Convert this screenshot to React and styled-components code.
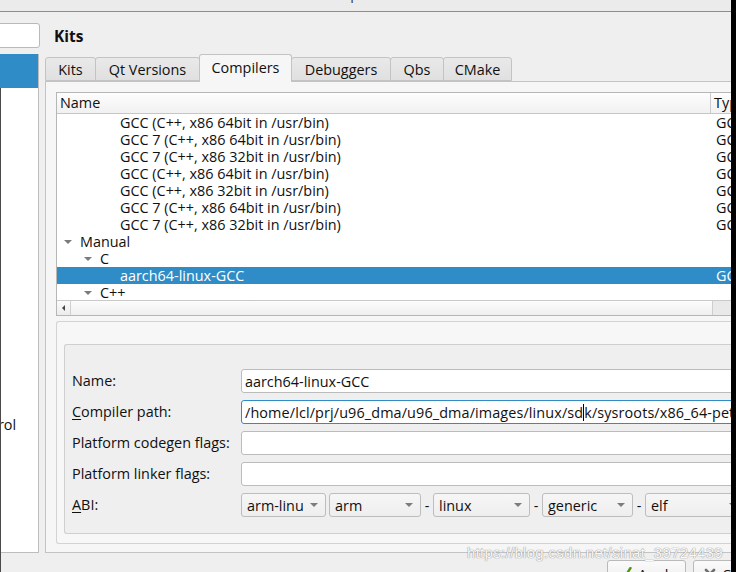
import React from "react";
import styled, { createGlobalStyle } from "styled-components";

const GlobalStyle = createGlobalStyle`
  html, body { margin: 0; padding: 0; background: #efefef; }
  body {
    font-family: "Open Sans", "Noto Sans", sans-serif;
    font-size: 14.4px;
    line-height: 19px;
    color: #101010;
  }
  #root { width: 736px; height: 572px; }
`;

const Window = styled.div`
  position: relative;
  width: 736px;
  height: 572px;
  box-sizing: border-box;
  border-right: 5px solid #000;
  overflow: hidden;
  background: #efefef;
  display: flex;
  flex-direction: column;
`;

const TitleBar = styled.div`
  flex: none;
  height: 11px;
  background: #ebebeb;
  border-bottom: 1px solid #8e8e8e;
  overflow: hidden;
  display: flex;
  justify-content: center;
`;

const TitleText = styled.span`
  display: block;
  margin-top: -16px;
  font-size: 14.4px;
  line-height: 20px;
  color: #3a3a3a;
`;

const WindowEdge = styled.div`
  position: absolute;
  left: 0;
  top: 88px;
  bottom: 0;
  width: 1px;
  background: #4a4a4a;
`;

const Body = styled.div`
  flex: none;
  height: 541px;
  display: flex;
`;

const LeftPane = styled.div`
  flex: none;
  width: 39px;
  display: flex;
  flex-direction: column;
`;

const SearchField = styled.div`
  flex: none;
  margin-top: 11px;
  margin-left: -8px;
  height: 23px;
  width: 46px;
  background: #fff;
  border: 1px solid #b9b9b9;
  border-radius: 3px;
`;

const SideList = styled.div`
  flex: 1;
  margin-top: 6px;
  margin-left: -162px;
  width: 200px;
  background: #fff;
  border-right: 1px solid #bdbdbd;
  border-bottom: 1px solid #bdbdbd;
  overflow: hidden;
`;

const SideItem = styled.div`
  height: ${(p) => p.$h}px;
  display: flex;
  align-items: center;
  padding-left: 74px;
  white-space: nowrap;
  background: ${(p) => (p.$selected ? "#308cc6" : "transparent")};
  color: ${(p) => (p.$selected ? "#fff" : "#101010")};
`;

const Main = styled.div`
  flex: none;
  width: 740px;
  display: flex;
  flex-direction: column;
  padding-left: 6px;
`;

const Heading = styled.div`
  margin-top: 14px;
  margin-left: 9px;
  height: 20px;
  line-height: 20px;
  font-size: 15.5px;
  font-weight: 700;
`;

const TabBar = styled.div`
  margin-top: 8px;
  height: 27px;
  display: flex;
  align-items: flex-end;
  position: relative;
  z-index: 1;
`;

const Tab = styled.div`
  box-sizing: border-box;
  height: ${(p) => (p.$active ? 28 : 24)}px;
  margin-bottom: ${(p) => (p.$active ? -1 : 0)}px;
  margin-left: -1px;
  width: ${(p) => p.$w}px;
  display: flex;
  align-items: center;
  justify-content: center;
  white-space: nowrap;
  padding-bottom: ${(p) => (p.$active ? 2 : 0)}px;
  border: 1px solid #c3c3c3;
  border-bottom: ${(p) => (p.$active ? "none" : "1px solid #c3c3c3")};
  border-radius: 3px 3px 0 0;
  background: ${(p) =>
    p.$active ? "#f6f6f6" : "linear-gradient(#e9e9e9, #e0e0e0)"};
  &:first-child { margin-left: 0; }
`;

const TabPane = styled.div`
  flex: 1;
  border: 1px solid #c3c3c3;
  background: #f6f6f6;
  padding: 10px 0 8px 10px;
  display: flex;
  flex-direction: column;
`;

const Tree = styled.div`
  flex: none;
  height: 222px;
  border: 1px solid #b6b6b6;
  background: #fff;
  display: flex;
  flex-direction: column;
`;

const TreeHeader = styled.div`
  flex: none;
  height: 20px;
  display: flex;
  background: linear-gradient(#fdfdfd, #f1f1f1);
  border-bottom: 1px solid #c6c6c6;
`;

const HeaderCell = styled.div`
  box-sizing: border-box;
  width: ${(p) => p.$w}px;
  flex: none;
  padding-left: ${(p) => p.$pad}px;
  line-height: 20px;
  border-right: 1px solid #cbcbcb;
  white-space: nowrap;
`;

const TreeBody = styled.div`
  flex: 1;
  overflow: hidden;
`;

const TreeRow = styled.div`
  height: 17px;
  line-height: 17px;
  display: flex;
  align-items: center;
  background: ${(p) => (p.$selected ? "#308cc6" : "transparent")};
  color: ${(p) => (p.$selected ? "#fff" : "#101010")};
  white-space: nowrap;
`;

const NameCell = styled.div`
  box-sizing: border-box;
  flex: none;
  width: 653px;
  display: flex;
  align-items: center;
  padding-left: ${(p) => 7 + p.$level * 20}px;
`;

const Branch = styled.span`
  flex: none;
  width: 16px;
  display: flex;
  align-items: center;
  &::before {
    content: "";
    display: ${(p) => (p.$open ? "block" : "none")};
    border-left: 4px solid transparent;
    border-right: 4px solid transparent;
    border-top: 4px solid #7b7b7b;
  }
`;

const TypeCell = styled.div`
  padding-left: 6px;
`;

const HScroll = styled.div`
  flex: none;
  height: 14px;
  display: flex;
  border-top: 1px solid #c9c9c9;
  background: #e9e9e9;
`;

const ScrollArrow = styled.div`
  flex: none;
  width: 13px;
  display: flex;
  align-items: center;
  justify-content: center;
  border-right: 1px solid #cfcfcf;
  background: linear-gradient(#fbfbfb, #ececec);
  &::before {
    content: "";
    border-top: 3px solid transparent;
    border-bottom: 3px solid transparent;
    border-right: 3px solid #444;
  }
`;

const ScrollHandle = styled.div`
  flex: none;
  width: 641px;
  border-right: 1px solid #cdcdcd;
  background: linear-gradient(#fcfcfc, #efefef);
`;

const DetailsPanel = styled.div`
  flex: 1;
  margin-top: 5px;
  border: 1px solid #d3d3d3;
  border-right: none;
  border-radius: 3px 0 0 3px;
  background: #f7f7f7;
  padding: 22px 0 9px 7px;
  display: flex;
  flex-direction: column;
`;

const InnerFrame = styled.div`
  flex: 1;
  border: 1px solid #cfcfcf;
  border-right: none;
  border-radius: 3px 0 0 3px;
  background: #efefef;
  padding: 24px 0 0 7px;
  display: grid;
  grid-template-columns: 169px 1fr;
  grid-auto-rows: 24px;
  row-gap: 7px;
  align-items: center;
  align-content: start;
`;

const Label = styled.div`
  white-space: nowrap;
  line-height: 20px;
  & u { text-decoration-thickness: 1px; text-underline-offset: 2px; }
`;

const LineEdit = styled.div`
  box-sizing: border-box;
  height: 24px;
  display: flex;
  align-items: center;
  padding-left: 3px;
  white-space: pre;
  overflow: hidden;
  background: #fff;
  border: 1px solid ${(p) => (p.$focused ? "#308cc6" : "#bcbcbc")};
  border-radius: 3px;
`;

const PathText = styled.span`
  letter-spacing: 0.12px;
`;

const Caret = styled.span`
  flex: none;
  display: inline-block;
  width: 1px;
  height: 17px;
  background: #000;
`;

const AbiRow = styled.div`
  display: flex;
  align-items: center;
  gap: 3px;
  height: 24px;
`;

const Combo = styled.div`
  box-sizing: border-box;
  flex: none;
  width: ${(p) => p.$w}px;
  height: 24px;
  display: flex;
  align-items: center;
  padding-left: 5px;
  border: 1px solid #bdbdbd;
  border-radius: 3px;
  background: linear-gradient(#f6f6f6, #eeeeee);
`;

const ComboText = styled.span`
  flex: 1;
  overflow: hidden;
  white-space: nowrap;
  text-overflow: clip;
`;

const ComboArrow = styled.span`
  flex: none;
  width: 22px;
  display: flex;
  justify-content: center;
  &::before {
    content: "";
    border-left: 4px solid transparent;
    border-right: 4px solid transparent;
    border-top: 4px solid #7c7c7c;
  }
`;

const Dash = styled.span`
  flex: none;
  width: 6px;
  text-align: center;
`;

const Footer = styled.div`
  flex: 1;
  display: flex;
  justify-content: flex-end;
  align-items: flex-start;
  padding-top: 7px;
  gap: 7px;
  margin-right: -52px;
`;

const PushButton = styled.div`
  box-sizing: border-box;
  flex: none;
  width: ${(p) => p.$w}px;
  height: 28px;
  display: flex;
  align-items: center;
  gap: 6px;
  padding-left: 10px;
  border: 1px solid #b9b9b9;
  border-radius: 3px;
  background: linear-gradient(#fafafa, #ececec);
`;

const Watermark = styled.div`
  position: absolute;
  left: 467px;
  top: 543px;
  font-family: "Liberation Sans", Arial, sans-serif;
  font-size: 15px;
  letter-spacing: 0.3px;
  color: rgba(255, 255, 255, 0.95);
  text-shadow: 0 0 1px #8c8c8c, 0 0 1px #9a9a9a;
  white-space: nowrap;
  pointer-events: none;
`;

const sideItems = [
  { label: "Kits", h: 34, selected: true },
  { label: "Environment", h: 32 },
  { label: "Text Editor", h: 32 },
  { label: "FakeVim", h: 32 },
  { label: "Help", h: 32 },
  { label: "C++", h: 32 },
  { label: "Qt Quick", h: 32 },
  { label: "Build & Run", h: 32 },
  { label: "Debugger", h: 32 },
  { label: "Designer", h: 32 },
  { label: "Analyzer", h: 32 },
  { label: "Version Control", h: 32 },
  { label: "Devices", h: 32 },
  { label: "Testing", h: 32 },
];

const tabs = [
  { label: "Kits", w: 51 },
  { label: "Qt Versions", w: 105 },
  { label: "Compilers", w: 93, active: true },
  { label: "Debuggers", w: 100 },
  { label: "Qbs", w: 54 },
  { label: "CMake", w: 69 },
];

const treeRows = [
  { name: "GCC (C++, x86 64bit in /usr/bin)", level: 2, type: "GCC" },
  { name: "GCC 7 (C++, x86 64bit in /usr/bin)", level: 2, type: "GCC" },
  { name: "GCC 7 (C++, x86 32bit in /usr/bin)", level: 2, type: "GCC" },
  { name: "GCC (C++, x86 64bit in /usr/bin)", level: 2, type: "GCC" },
  { name: "GCC (C++, x86 32bit in /usr/bin)", level: 2, type: "GCC" },
  { name: "GCC 7 (C++, x86 64bit in /usr/bin)", level: 2, type: "GCC" },
  { name: "GCC 7 (C++, x86 32bit in /usr/bin)", level: 2, type: "GCC" },
  { name: "Manual", level: 0, open: true },
  { name: "C", level: 1, open: true },
  { name: "aarch64-linux-GCC", level: 2, type: "GCC", selected: true },
  { name: "C++", level: 1, open: true },
];

const CheckIcon = () => (
  <svg width="14" height="14" viewBox="0 0 14 14">
    <path d="M2 8 L5.5 12 L12.5 1" fill="none" stroke="#4e9a06" strokeWidth="2.4" strokeLinecap="round" />
  </svg>
);

const CrossIcon = () => (
  <svg width="12" height="12" viewBox="0 0 12 12">
    <path d="M2 2 L10 10 M10 2 L2 10" fill="none" stroke="#6f6f6f" strokeWidth="2.6" strokeLinecap="round" />
  </svg>
);

export default function App() {
  return (
    <>
      <GlobalStyle />
      <Window>
        <TitleBar>
          <TitleText>Options</TitleText>
        </TitleBar>
        <Body>
          <LeftPane>
            <SearchField />
            <SideList>
              {sideItems.map((it) => (
                <SideItem key={it.label} $h={it.h} $selected={it.selected}>
                  {it.label}
                </SideItem>
              ))}
            </SideList>
          </LeftPane>
          <Main>
            <Heading>Kits</Heading>
            <TabBar>
              {tabs.map((t) => (
                <Tab key={t.label} $w={t.w} $active={t.active}>
                  {t.label}
                </Tab>
              ))}
            </TabBar>
            <TabPane>
              <Tree>
                <TreeHeader>
                  <HeaderCell $w={654} $pad={3}>Name</HeaderCell>
                  <HeaderCell $w={80} $pad={3}>Type</HeaderCell>
                </TreeHeader>
                <TreeBody>
                  {treeRows.map((r, i) => (
                    <TreeRow key={i} $selected={r.selected}>
                      <NameCell $level={r.level}>
                        <Branch $open={r.open} />
                        {r.name}
                      </NameCell>
                      <TypeCell>{r.type || ""}</TypeCell>
                    </TreeRow>
                  ))}
                </TreeBody>
                <HScroll>
                  <ScrollArrow />
                  <ScrollHandle />
                </HScroll>
              </Tree>
              <DetailsPanel>
                <InnerFrame>
                  <Label>Name:</Label>
                  <LineEdit>aarch64-linux-GCC</LineEdit>
                  <Label>
                    <u>C</u>ompiler path:
                  </Label>
                  <LineEdit $focused>
                    <PathText>/home/lcl/prj/u96_dma/u96_dma/images/linux/sd</PathText>
                    <Caret />
                    <PathText>k/sysroots/x86_64-petalinux/usr/bin/aarch64-linux-gnu/aarch64-linux-gnu-gcc</PathText>
                  </LineEdit>
                  <Label>Platform codegen flags:</Label>
                  <LineEdit />
                  <Label>Platform linker flags:</Label>
                  <LineEdit />
                  <Label>
                    <u>A</u>BI:
                  </Label>
                  <AbiRow>
                    <Combo $w={85}>
                      <ComboText>arm-linux</ComboText>
                      <ComboArrow />
                    </Combo>
                    <Combo $w={92}>
                      <ComboText>arm</ComboText>
                      <ComboArrow />
                    </Combo>
                    <Dash>-</Dash>
                    <Combo $w={97}>
                      <ComboText>linux</ComboText>
                      <ComboArrow />
                    </Combo>
                    <Dash>-</Dash>
                    <Combo $w={91}>
                      <ComboText>generic</ComboText>
                      <ComboArrow />
                    </Combo>
                    <Dash>-</Dash>
                    <Combo $w={100}>
                      <ComboText>elf</ComboText>
                      <ComboArrow />
                    </Combo>
                  </AbiRow>
                </InnerFrame>
              </DetailsPanel>
            </TabPane>
          </Main>
        </Body>
        <Footer>
          <PushButton $w={79}>
            <CheckIcon />
            Apply
          </PushButton>
          <PushButton $w={90}>
            <CrossIcon />
            Cancel
          </PushButton>
        </Footer>
        <WindowEdge />
        <Watermark>https://blog.csdn.net/sinat_39724439</Watermark>
      </Window>
    </>
  );
}
